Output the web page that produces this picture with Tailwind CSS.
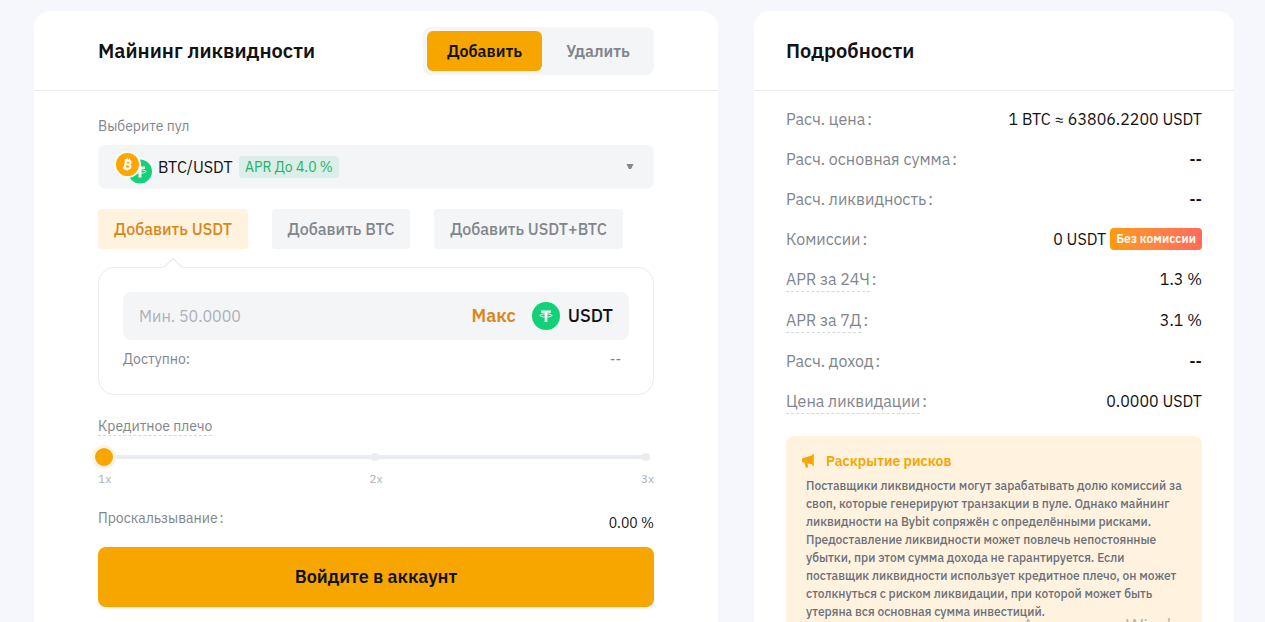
<!DOCTYPE html>
<html lang="ru">
<head>
<meta charset="utf-8">
<meta name="viewport" content="width=device-width, initial-scale=1">
<title>Майнинг ликвидности</title>
<script src="https://cdn.jsdelivr.net/npm/@tailwindcss/browser@4"></script>
</head>
<body class="bg-[#f5f7fc] font-['IBM_Plex_Sans','Inter',sans-serif] text-[#121214]">
<div class="relative min-h-screen">
<main class="flex items-stretch gap-9 pt-[11px] pr-[31px] pl-[34px]">
  <section class="min-w-0 flex-1 rounded-t-2xl bg-white pb-8">
    <header class="flex h-20 items-center justify-between border-b border-[#eaecee] px-16">
      <h1 class="text-xl font-semibold">Майнинг ликвидности</h1>
      <div class="flex rounded-lg bg-[#f3f5f7] p-1 text-base font-semibold">
        <button type="button" class="h-10 w-[115px] rounded-md bg-[#f7a600]">Добавить</button>
        <button type="button" class="h-10 w-[108px] rounded-md pl-1 text-[#81858c]">Удалить</button>
      </div>
    </header>

    <div class="px-16 pt-[25px]">
      <label for="pool" class="block text-sm leading-5 text-[#81858c]">Выберите пул</label>
      <div class="mt-[9px] flex h-11 items-center rounded-lg bg-[#f3f5f7] pr-5 pl-4">
        <svg class="mr-1 h-9 w-10" viewBox="0 0 40 36" aria-hidden="true">
          <circle cx="26" cy="22.500" r="13.500" fill="#fafbfc"/>
          <circle cx="26" cy="22.500" r="12" fill="#12d176"/>
          <path d="M21 17.500h10v2.500h-3.500v8.500h-3v-8.500H21z" fill="#fff"/>
          <ellipse cx="26" cy="22.500" rx="6" ry="1.700" fill="none" stroke="#fff" stroke-width=".8"/>
          <circle cx="13.500" cy="15.500" r="13.500" fill="#fafbfc"/>
          <circle cx="13.500" cy="15.500" r="11.500" fill="#ffa500"/>
          <g transform="rotate(12 13.500 15.500)" fill="none" stroke="#fff">
            <path stroke-width="2" d="M9.800 11.500h4.500a1.900 1.900 0 0 1 0 3.900h-3 3.500a2 2 0 0 1 0 4.100h-5M11.300 11.500v8"/>
            <path stroke-width="1.300" d="M12.200 9.400v2M14.300 9.400v2M12.200 19.500v2M14.300 19.500v2"/>
          </g>
        </svg>
        <select id="pool" class="appearance-none bg-transparent text-base outline-none"><option>BTC/USDT</option></select>
        <span class="ml-1.5 rounded bg-[#dbeee7] px-1.5 text-sm leading-[22px] text-[#20b26c]">APR До 4.0 %</span>
        <svg class="ml-auto h-2 w-2" viewBox="0 0 8 8" aria-hidden="true"><path d="M.5 1h7L5 6H3z" fill="#81858c"/></svg>
      </div>

      <div class="mt-5 flex gap-6 text-base font-medium text-[#81858c]">
        <button type="button" class="h-10 w-[150px] rounded bg-[#fff3e0] text-[#d9871b]">Добавить USDT</button>
        <button type="button" class="h-10 w-[138px] rounded bg-[#f3f5f7]">Добавить BTC</button>
        <button type="button" class="h-10 w-[189px] rounded bg-[#f3f5f7]">Добавить USDT+BTC</button>
      </div>

      <div class="relative mt-[18px] rounded-2xl border border-[#eaecf2] px-6 pt-6 pb-[25px]">
        <svg class="absolute -top-2.5 left-16 h-2.5 w-5" viewBox="0 0 20 10" aria-hidden="true"><path d="M0 10 10 0l10 10z" fill="#fff"/><path d="M.5 9.500 10 .5l9.500 9" fill="none" stroke="#eaecf2" stroke-width="1.300"/></svg>
        <div class="flex h-12 items-center rounded-lg bg-[#f3f5f7] px-4">
          <input type="text" aria-label="Сумма USDT" placeholder="Мин. 50.0000" class="min-w-0 flex-1 bg-transparent text-base outline-none placeholder:text-[#adb1b8]">
          <button type="button" class="text-lg font-semibold text-[#d9871b]">Макс</button>
          <svg class="mr-2 ml-4 h-7 w-7" viewBox="0 0 28 28" aria-hidden="true">
            <circle cx="14" cy="14" r="14" fill="#12d176"/>
            <path d="M9 8.500h10v2.300h-3.700V20h-2.600v-9.200H9z" fill="#fff"/>
            <ellipse cx="14" cy="13.500" rx="6" ry="1.600" fill="none" stroke="#fff" stroke-width=".9"/>
          </svg>
          <span class="text-lg font-medium">USDT</span>
        </div>
        <div class="mt-[9px] flex justify-between pr-2 text-sm leading-5 text-[#81858c]"><span>Доступно:</span><span>--</span></div>
      </div>

      <label for="leverage" class="mt-[22px] inline-block border-b border-dashed border-[#d5d8e2] text-sm leading-[18px] text-[#81858c]">Кредитное плечо</label>
      <div class="relative -mr-1 -ml-[3px] mt-[11px] h-[18px]">
        <div class="absolute top-[7px] right-3 left-3 h-1 rounded bg-[#e9ecf1]"></div>
        <div class="absolute top-[5px] right-2 left-[5px] flex justify-between"><i class="h-2 w-2 rounded-full"></i><i class="h-2 w-2 rounded-full bg-[#e9ecf1]"></i><i class="h-2 w-2 rounded-full bg-[#e9ecf1]"></i></div>
        <input id="leverage" type="range" min="1" max="3" value="1" step="1" class="absolute inset-0 h-[18px] w-full appearance-none bg-transparent [&::-webkit-slider-thumb]:h-[18px] [&::-webkit-slider-thumb]:w-[18px] [&::-webkit-slider-thumb]:appearance-none [&::-webkit-slider-thumb]:rounded-full [&::-webkit-slider-thumb]:bg-[#f7a600] [&::-webkit-slider-thumb]:shadow-[0_0_0_3px_#fff3e0]">
      </div>
      <div class="mt-1 flex justify-between text-xs leading-[18px] text-[#adb1b8]"><span>1x</span><span>2x</span><span>3x</span></div>

      <div class="mt-5 flex justify-between text-sm leading-5">
        <span class="text-[#81858c]">Проскальзывание<span class="ml-0.5">:</span></span>
        <span class="mt-[5px]">0.00 %</span>
      </div>
      <button type="button" class="mt-3.5 h-[60px] w-full rounded-lg bg-[#f7a600] text-lg font-semibold shadow-[0_2px_2px_#f1f2f8]">Войдите в аккаунт</button>
    </div>
  </section>

  <section class="w-[480px] shrink-0 rounded-t-2xl bg-white pb-8">
    <header class="flex h-20 items-center border-b border-[#eaecee] px-8">
      <h2 class="text-xl font-semibold">Подробности</h2>
    </header>
    <div class="px-8 pt-4">
      <dl class="flex flex-col gap-4 text-base leading-6 [&_dt]:text-[#81858c]">
        <div class="flex justify-between"><dt>Расч. цена<span class="ml-0.5">:</span></dt><dd>1 BTC ≈ 63806.2200 USDT</dd></div>
        <div class="flex justify-between"><dt>Расч. основная сумма<span class="ml-0.5">:</span></dt><dd class="font-medium">--</dd></div>
        <div class="flex justify-between"><dt>Расч. ликвидность<span class="ml-0.5">:</span></dt><dd class="font-medium">--</dd></div>
        <div class="flex justify-between"><dt>Комиссии<span class="ml-0.5">:</span></dt><dd class="flex items-center gap-1">0 USDT<span class="rounded bg-linear-to-r from-[#ff9a00] to-[#ff6b5b] px-1.5 text-xs leading-[22px] font-semibold text-white">Без комиссии</span></dd></div>
        <div class="flex justify-between"><dt class="flex"><span class="border-b border-dashed border-[#d5d8e2]">APR за 24Ч</span><span class="ml-0.5">:</span></dt><dd>1.3 %</dd></div>
        <div class="flex justify-between"><dt class="flex"><span class="border-b border-dashed border-[#d5d8e2]">APR за 7Д</span><span class="ml-0.5">:</span></dt><dd>3.1 %</dd></div>
        <div class="flex justify-between"><dt>Расч. доход<span class="ml-0.5">:</span></dt><dd class="font-medium">--</dd></div>
        <div class="flex justify-between"><dt class="flex"><span class="border-b border-dashed border-[#d5d8e2]">Цена ликвидации</span><span class="ml-0.5">:</span></dt><dd>0.0000 USDT</dd></div>
      </dl>
      <div class="mt-[22px] rounded-lg bg-[#fff3e0] px-4 pt-3.5 pb-5">
        <h3 class="flex items-center text-sm leading-[22px] font-semibold text-[#f7a600]">
          <svg class="mr-2.5 h-3.5 w-3.5" viewBox="0 0 14 14" fill="#f7a600" aria-hidden="true"><path d="M10.500 0h1.300v12h-1.300v-1.500L5.500 9.500 6.200 13 4 14 2.500 8.800H1.300V8H0V4.500h1.300V4L10.500 1.300z"/></svg>
          Раскрытие рисков
        </h3>
        <p class="mt-[5px] pl-1 text-xs leading-[18px] font-medium whitespace-nowrap text-[#6b6f78]">Поставщики ликвидности могут зарабатывать долю комиссий за<br>своп, которые генерируют транзакции в пуле. Однако майнинг<br>ликвидности на Bybit сопряжён с определёнными рисками.<br>Предоставление ликвидности может повлечь непостоянные<br>убытки, при этом сумма дохода не гарантируется. Если<br>поставщик ликвидности использует кредитное плечо, он может<br>столкнуться с риском ликвидации, при которой может быть<br>утеряна вся основная сумма инвестиций.</p>
      </div>
    </div>
  </section>
</main>
<div class="pointer-events-none absolute top-[611px] left-[1022px] font-['Open_Sans',sans-serif] text-[19px] leading-7 whitespace-nowrap text-[#b9b5ae]">Активация Windows</div>
</div>
</body>
</html>
